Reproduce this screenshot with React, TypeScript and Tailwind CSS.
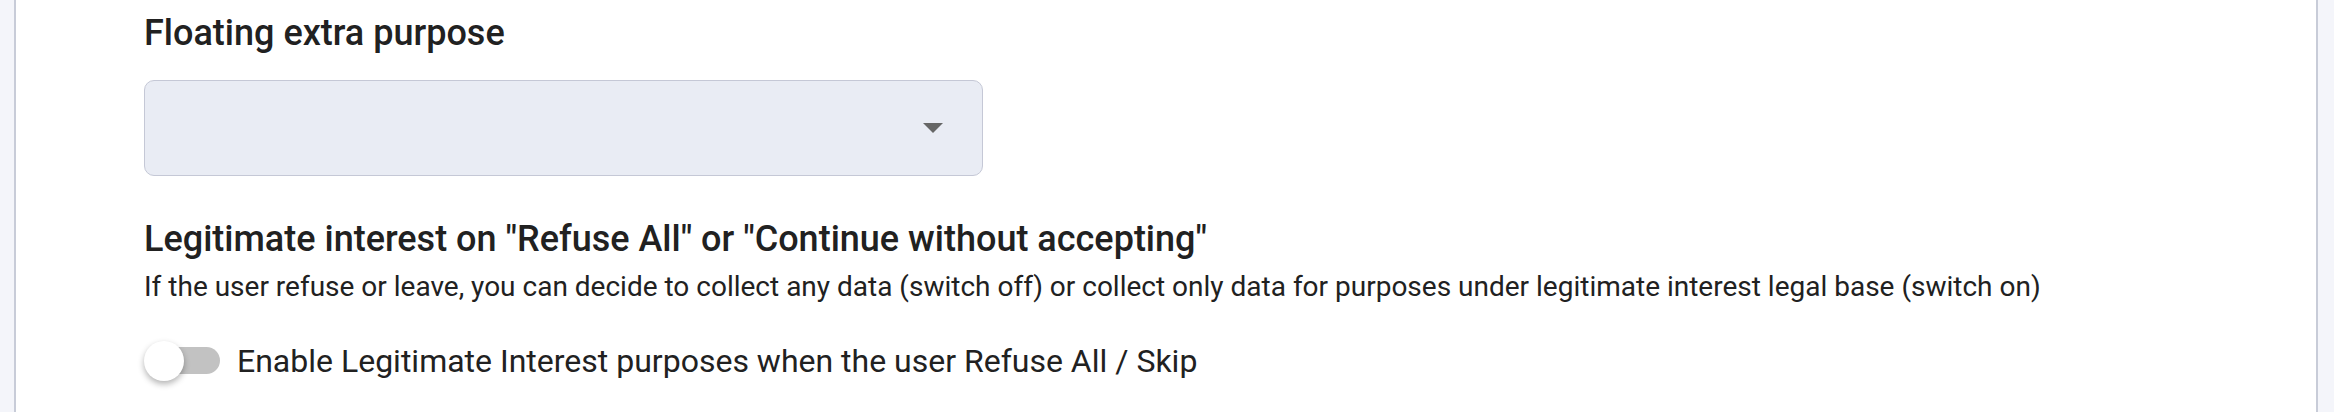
import React from "react";

export default function App() {
  return (
    <div
      className="flex h-[412px] w-[2334px] overflow-hidden bg-[#f4f5fa]"
      style={{ fontFamily: "Roboto, 'Noto Sans', sans-serif" }}
    >
      <div className="w-[14px] shrink-0" />
      <div className="flex-1 border-x-2 border-[#c8ccd8] bg-white">
        <div className="pl-[128px] pt-[11px] text-[#212121]">
          <h2 className="text-[36px] font-medium leading-[44px]">Floating extra purpose</h2>
          <div className="mt-[25px] flex h-[96px] w-[839px] items-center justify-end rounded-[10px] border-[1.5px] border-[#c5c8d6] bg-[#e9ecf4] pr-[39px]">
            <svg width="20" height="10" viewBox="0 0 20 10">
              <path d="M0 0 L20 0 L10 10 Z" fill="#666666" />
            </svg>
          </div>
          <h3 className="mt-[41px] text-[36px] font-medium leading-[44px]">
            Legitimate interest on "Refuse All" or "Continue without accepting"
          </h3>
          <p className="mt-[8px] text-[28px] leading-[36px]">
            If the user refuse or leave, you can decide to collect any data (switch off) or collect only data for purposes under legitimate interest legal base (switch on)
          </p>
          <div className="mt-[36px] flex items-center">
            <div className="relative h-[40px] w-[80px]">
              <div className="absolute left-[12px] top-[6px] h-[27px] w-[64px] rounded-full bg-[#c2c2c2]" />
              <div className="absolute left-0 top-0 h-[40px] w-[40px] rounded-full bg-white shadow-[0_3px_6px_rgba(0,0,0,0.3)]" />
            </div>
            <span className="ml-[13px] text-[32px] leading-[40px]">
              Enable Legitimate Interest purposes when the user Refuse All / Skip
            </span>
          </div>
        </div>
      </div>
      <div className="w-[16px] shrink-0" />
    </div>
  );
}
